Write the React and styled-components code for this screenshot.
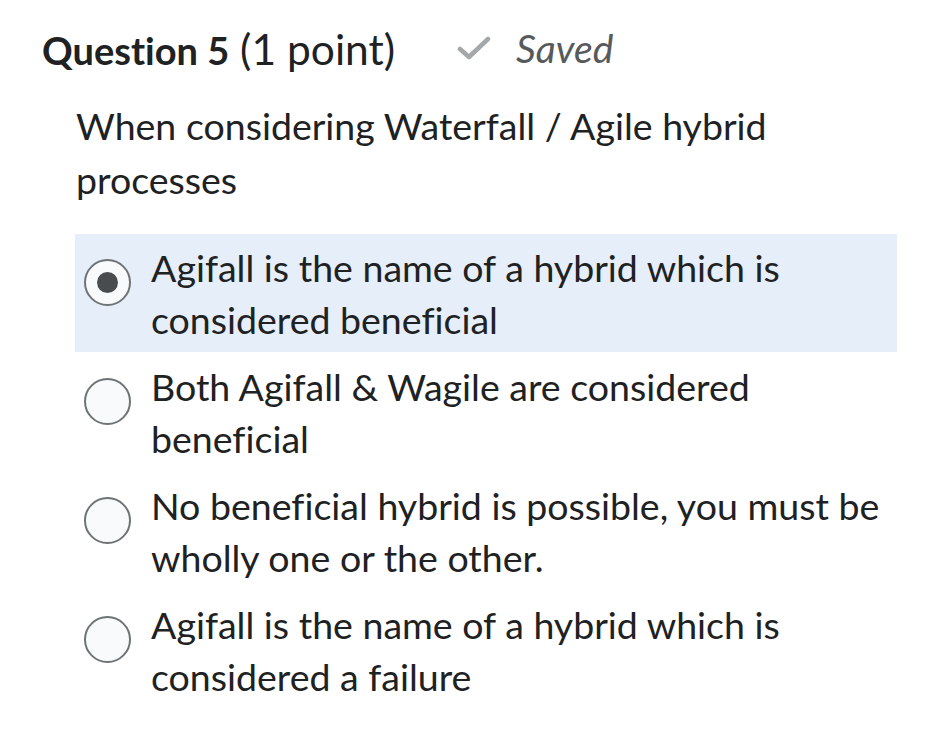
import React from "react"
import styled, { createGlobalStyle } from "styled-components"

const GlobalStyle = createGlobalStyle`
  body {
    margin: 0;
    background: #ffffff;
    font-family: Lato, "Open Sans", sans-serif;
    color: #202122;
    font-variant-ligatures: none;
  }
`

const options = [
  { text: "Agifall is the name of a hybrid which is considered beneficial", checked: true },
  { text: "Both Agifall & Wagile are considered beneficial" },
  { text: "No beneficial hybrid is possible, you must be wholly one or the other." },
  { text: "Agifall is the name of a hybrid which is considered a failure" },
]

const App = () => {
  return (
    <Page>
      <GlobalStyle />
      <Header>
        <Title>
          <strong>Question 5</strong> <span>(1 point)</span>
        </Title>
        <Status>
          <svg width="34" height="26" viewBox="0 0 34 26">
            <path d="M3 14 L12 22 L31 4" fill="none" stroke="#a4a8ab" strokeWidth="4.5" strokeLinecap="round" strokeLinejoin="round" />
          </svg>
          <em>Saved</em>
        </Status>
      </Header>
      <Prompt>When considering Waterfall / Agile hybrid processes</Prompt>
      <Options>
        {options.map((o, i) => (
          <Option key={i} $checked={o.checked}>
            <Radio $checked={o.checked} />
            <Label>{o.text}</Label>
          </Option>
        ))}
      </Options>
    </Page>
  )
}

export default App

const Page = styled.div`
  padding: 22px 28px 0 42px;
`

const Header = styled.div`
  display: flex;
  align-items: center;
  height: 52px;
  gap: 62px;
`

const Title = styled.div`
  font-size: 42.5px;
  white-space: nowrap;
  strong {
    font-weight: 700;
    font-size: 38px;
  }
  span {
    font-weight: 400;
  }
`

const Status = styled.div`
  display: flex;
  align-items: center;
  gap: 25px;
  color: #565a5c;
  font-size: 39px;
  em {
    font-style: italic;
  }
`

const Prompt = styled.p`
  margin: 25px 0 0 34px;
  width: 740px;
  font-size: 37.5px;
  line-height: 54px;
`

const Options = styled.div`
  margin: 27px 0 0 33px;
  width: 822px;
  display: flex;
  flex-direction: column;
  gap: 1px;
`

const Option = styled.label`
  display: flex;
  align-items: flex-start;
  gap: 20px;
  padding: 8px 4px 6px 9px;
  min-height: 104px;
  background: ${(p) => (p.$checked ? "#e6eef9" : "transparent")};
`

const Radio = styled.span`
  flex: none;
  box-sizing: border-box;
  width: 47px;
  height: 47px;
  margin-top: 17px;
  border-radius: 50%;
  border: 2px solid #6e7376;
  background: #f9fafb;
  display: flex;
  align-items: center;
  justify-content: center;
  &::after {
    content: "";
    display: ${(p) => (p.$checked ? "block" : "none")};
    width: 21px;
    height: 21px;
    border-radius: 50%;
    background: #494c4e;
  }
`

const Label = styled.span`
  font-size: 37.5px;
  line-height: 52px;
`
